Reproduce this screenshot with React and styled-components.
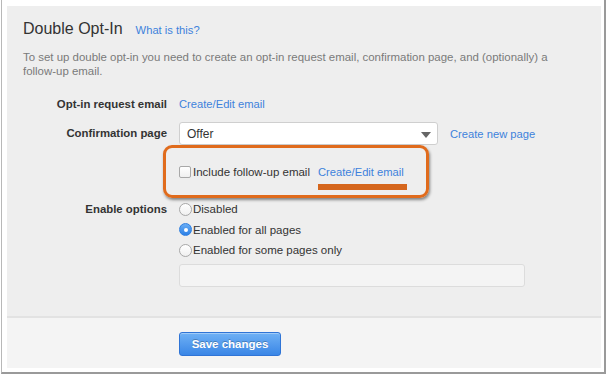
import React from "react";
import styled, { createGlobalStyle } from "styled-components";

const GlobalStyle = createGlobalStyle`
  html, body {
    margin: 0;
    padding: 0;
    background: #ffffff;
    font-family: "Liberation Sans", Arial, Helvetica, sans-serif;
  }
`;

const Frame = styled.div`
  box-sizing: border-box;
  width: 605px;
  height: 374px;
  margin-left: 1px;
  background: #fff;
  border-left: 1px solid #b8b8b8;
  border-right: 2px solid #9a9a9a;
  border-bottom: 2px solid #9a9a9a;
  padding: 6px 4px 4px 5px;
`;

const Panel = styled.div`
  width: 594px;
  height: 362px;
  display: flex;
  flex-direction: column;
`;

const Main = styled.div`
  background: #eeeeee;
  padding: 13px 16px 0 16px;
  height: 297px;
  border-bottom: 2px solid #e2e2e2;
  box-sizing: content-box;
`;

const Header = styled.div`
  display: flex;
  align-items: baseline;
  gap: 13px;
  height: 20px;
  line-height: 20px;
`;

const Title = styled.h2`
  margin: 0;
  font-size: 16px;
  font-weight: normal;
  color: #333;
`;

const Link = styled.a`
  color: #3d82dc;
  font-size: ${(p) => p.size || "11.2px"};
  text-decoration: none;
  cursor: pointer;
  white-space: nowrap;
`;

const Intro = styled.p`
  margin: 11px 0 0 0;
  font-size: 11.45px;
  line-height: 14px;
  color: #7a7a7a;
  width: 540px;
`;

const Form = styled.div`
  margin-top: 15px;
  display: grid;
  grid-template-columns: 144px 1fr;
  column-gap: 12px;
`;

const Label = styled.div`
  font-size: 11.4px;
  font-weight: bold;
  color: #333;
  text-align: right;
  height: ${(p) => p.h || "20px"};
  line-height: ${(p) => p.h || "20px"};
  margin-top: ${(p) => p.mt || "0"};
  white-space: nowrap;
`;

const Field = styled.div`
  display: flex;
  flex-direction: ${(p) => (p.column ? "column" : "row")};
  align-items: ${(p) => (p.column ? "flex-start" : "center")};
  gap: ${(p) => p.gap || "0"};
  height: ${(p) => p.h || "auto"};
  margin-top: ${(p) => p.mt || "0"};
  position: relative;
  font-size: 11.5px;
  color: #333;
`;

const Select = styled.div`
  box-sizing: border-box;
  width: 259px;
  height: 23px;
  background: #fff;
  border: 1px solid #cfcfcf;
  border-radius: 3px;
  display: flex;
  align-items: center;
  justify-content: space-between;
  padding: 0 6px 0 7px;
  font-size: 12px;
  color: #333;
`;

const Caret = styled.span`
  width: 0;
  height: 0;
  border-left: 5px solid transparent;
  border-right: 5px solid transparent;
  border-top: 6px solid #666;
  margin-top: 2px;
`;

const Highlight = styled.div`
  position: absolute;
  left: -16px;
  top: 0;
  width: 266px;
  height: 53px;
  box-sizing: border-box;
  border: 3px solid #e06b1c;
  border-radius: 9px;
  box-shadow: 1px 2px 3px rgba(0, 0, 0, 0.45);
  pointer-events: none;
`;

const Check = styled.span`
  box-sizing: border-box;
  width: 12px;
  height: 12px;
  border: 1px solid #a8a8a8;
  border-radius: 2px;
  background: linear-gradient(#ffffff, #f0f0f0);
  margin-right: 2px;
  flex: none;
`;

const Option = styled.div`
  display: flex;
  align-items: center;
  height: 20.5px;
  font-size: 11.5px;
  color: #333;
`;

const Radio = styled.span`
  box-sizing: border-box;
  width: 13px;
  height: 13px;
  border-radius: 50%;
  margin-right: 1px;
  flex: none;
  display: flex;
  align-items: center;
  justify-content: center;
  border: 1px solid ${(p) => (p.on ? "#2f7fe0" : "#a8a8a8")};
  background: ${(p) =>
    p.on ? "linear-gradient(#6aaef5, #2c80e6)" : "linear-gradient(#fff, #f0f0f0)"};
  &::after {
    content: "";
    display: ${(p) => (p.on ? "block" : "none")};
    width: 4px;
    height: 4px;
    border-radius: 50%;
    background: #fff;
  }
`;

const TextBox = styled.div`
  box-sizing: border-box;
  width: 346px;
  height: 23px;
  margin-top: 3px;
  background: #f4f4f4;
  border: 1px solid #dcdcdc;
  border-radius: 3px;
`;

const FollowUp = styled.span`
  position: relative;
  margin-left: 8px;
`;

const Underline = styled.span`
  position: absolute;
  left: 0;
  top: 18px;
  width: 89px;
  height: 6px;
  background: #d5661d;
`;

const Footer = styled.div`
  flex: 1;
  background: #f4f4f4;
  padding: 14px 0 0 172px;
`;

const Button = styled.button`
  box-sizing: border-box;
  width: 102px;
  height: 24px;
  border: 1px solid #2f74d6;
  border-radius: 3px;
  background: linear-gradient(#6fb1f5, #3a86e6);
  color: #fff;
  font-family: "Liberation Sans", Arial, sans-serif;
  font-size: 11.5px;
  font-weight: bold;
  text-shadow: 0 -1px 0 rgba(0, 0, 0, 0.25);
  box-shadow: inset 0 1px 0 rgba(255, 255, 255, 0.35);
  cursor: pointer;
`;

export default function App() {
  return (
    <>
      <GlobalStyle />
      <Frame>
        <Panel>
          <Main>
            <Header>
              <Title>Double Opt-In</Title>
              <Link size="11.2px">What is this?</Link>
            </Header>
            <Intro>
              To set up double opt-in you need to create an opt-in request email, confirmation page, and
              (optionally) a follow-up email.
            </Intro>
            <Form>
              <Label h="22px">Opt-in request email</Label>
              <Field h="22px">
                <Link>Create/Edit email</Link>
              </Field>

              <Label h="23px" mt="7px">Confirmation page</Label>
              <Field h="23px" mt="7px" gap="12px">
                <Select>
                  <span>Offer</span>
                  <Caret />
                </Select>
                <Link>Create new page</Link>
              </Field>

              <div />
              <Field h="54px">
                <Highlight />
                <Check />
                <span>Include follow-up email</span>
                <FollowUp>
                  <Link>Create/Edit email</Link>
                  <Underline />
                </FollowUp>
              </Field>

              <Label h="20.5px">Enable options</Label>
              <Field column>
                <Option>
                  <Radio />
                  Disabled
                </Option>
                <Option>
                  <Radio on />
                  Enabled for all pages
                </Option>
                <Option>
                  <Radio />
                  Enabled for some pages only
                </Option>
                <TextBox />
              </Field>
            </Form>
          </Main>
          <Footer>
            <Button>Save changes</Button>
          </Footer>
        </Panel>
      </Frame>
    </>
  );
}
